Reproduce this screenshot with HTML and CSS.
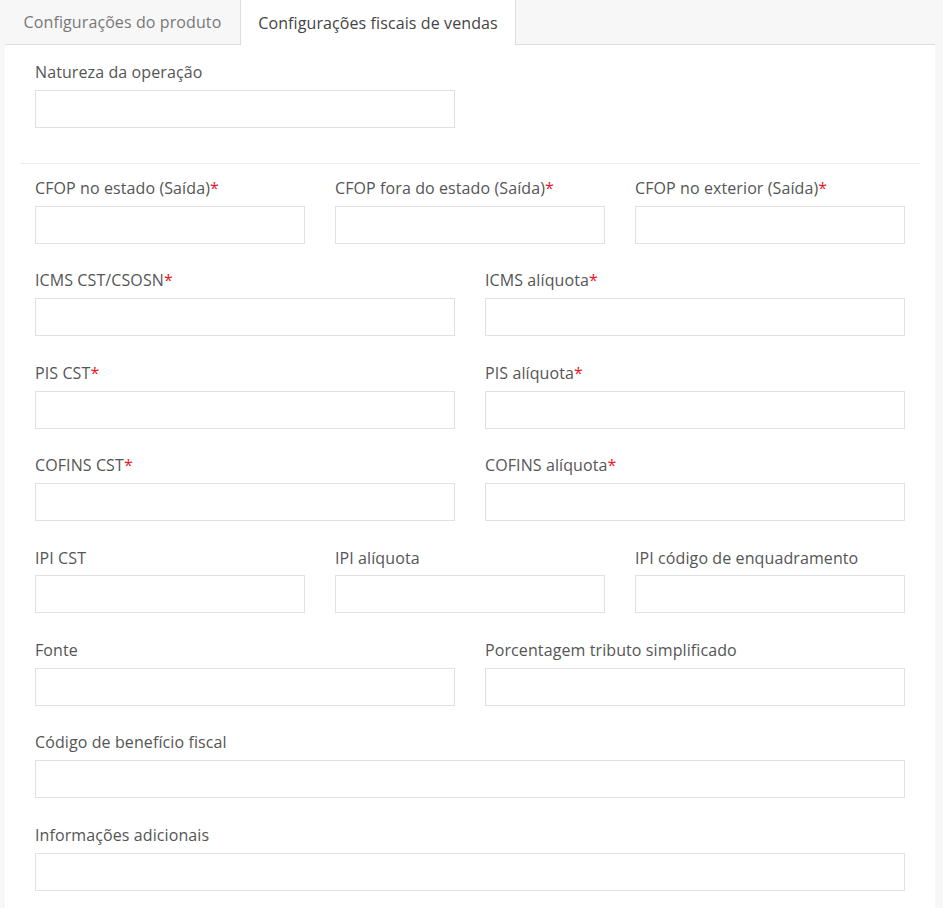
FILE: index.html
```html
<!DOCTYPE html>
<html lang="pt-BR">
<head>
  <meta charset="UTF-8">
  <title>Configurações fiscais de vendas</title>
  <link rel="stylesheet" href="styles.css">
</head>
<body>
  <div class="page">
    <div class="tabs">
      <a class="tab">Configurações do produto</a>
      <a class="tab active">Configurações fiscais de vendas</a>
    </div>

    <div class="panel">
      <div class="row">
        <div class="field col-6">
          <label>Natureza da operação</label>
          <input type="text">
        </div>
      </div>

      <hr class="sep">

      <div class="row">
        <div class="field col-4">
          <label>CFOP no estado (Saída)<span class="req">*</span></label>
          <input type="text">
        </div>
        <div class="field col-4">
          <label>CFOP fora do estado (Saída)<span class="req">*</span></label>
          <input type="text">
        </div>
        <div class="field col-4">
          <label>CFOP no exterior (Saída)<span class="req">*</span></label>
          <input type="text">
        </div>

        <div class="field col-6">
          <label>ICMS CST/CSOSN<span class="req">*</span></label>
          <input type="text">
        </div>
        <div class="field col-6">
          <label>ICMS alíquota<span class="req">*</span></label>
          <input type="text">
        </div>

        <div class="field col-6">
          <label>PIS CST<span class="req">*</span></label>
          <input type="text">
        </div>
        <div class="field col-6">
          <label>PIS alíquota<span class="req">*</span></label>
          <input type="text">
        </div>

        <div class="field col-6">
          <label>COFINS CST<span class="req">*</span></label>
          <input type="text">
        </div>
        <div class="field col-6">
          <label>COFINS alíquota<span class="req">*</span></label>
          <input type="text">
        </div>

        <div class="field col-4">
          <label>IPI CST</label>
          <input type="text">
        </div>
        <div class="field col-4">
          <label>IPI alíquota</label>
          <input type="text">
        </div>
        <div class="field col-4">
          <label>IPI código de enquadramento</label>
          <input type="text">
        </div>

        <div class="field col-6">
          <label>Fonte</label>
          <input type="text">
        </div>
        <div class="field col-6">
          <label>Porcentagem tributo simplificado</label>
          <input type="text">
        </div>

        <div class="field col-12">
          <label>Código de benefício fiscal</label>
          <input type="text">
        </div>

        <div class="field col-12">
          <label>Informações adicionais</label>
          <input type="text">
        </div>
      </div>
    </div>
  </div>
</body>
</html>
```

FILE: styles.css
```css
    html, body {
      margin: 0;
      background: #f7f7f7;
    }

    body {
      font-family: "Open Sans", "Noto Sans", Arial, sans-serif;
      font-size: 16px;
      letter-spacing: 0.1px;
      color: #555;
    }

    .page {
      width: 930px;
      margin-left: 5px;
    }

    .tabs {
      display: flex;
      height: 44px;
      border-bottom: 1px solid #ddd;
    }

    .tab {
      display: flex;
      align-items: center;
      justify-content: center;
      box-sizing: border-box;
      white-space: nowrap;
      color: #777;
      cursor: pointer;
    }

    .tab:first-child {
      width: 236px;
      border-right: 1px solid #ddd;
    }

    .tab.active {
      width: 275px;
      height: 45px;
      background: #fff;
      color: #444;
      border-right: 1px solid #ddd;
    }

    .panel {
      background: #fff;
      padding: 15px 15px 1px;
    }

    .row {
      display: flex;
      flex-wrap: wrap;
    }

    .field {
      box-sizing: border-box;
      padding: 0 15px;
      margin-bottom: 24.55px;
    }

    .col-4 { width: 33.3333%; }
    .col-6 { width: 50%; }
    .col-12 { width: 100%; }

    .field label {
      display: block;
      line-height: 1.42857;
      padding-top: 1px;
      margin-bottom: 6px;
    }

    .req {
      color: #e8151b;
    }

    .field input {
      display: block;
      width: 100%;
      height: 38px;
      box-sizing: border-box;
      border: 1px solid #dde2e5;
      border-radius: 0;
      background: #fff;
      font: inherit;
      padding: 6px 12px;
    }

    .sep {
      border: 0;
      border-top: 1px solid #eee;
      margin: 10.5px 0 12.1px;
    }
```
